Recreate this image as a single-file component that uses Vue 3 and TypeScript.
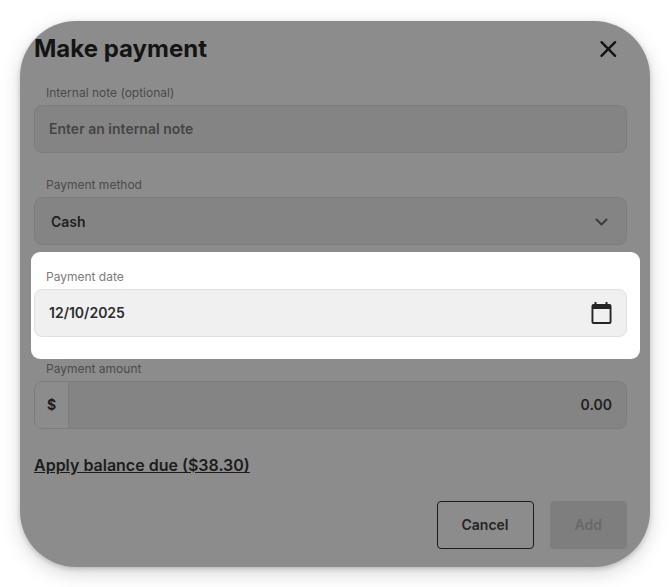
<script setup lang="ts">
import { computed, ref } from 'vue'

const note = ref('')
const method = ref('Cash')
const methods: string[] = ['Cash']
const date = ref('12/10/2025')
const amount = ref('0.00')
const balanceDue = 38.3

const canAdd = computed(() => Number(amount.value) > 0)

function applyBalance(): void {
  amount.value = balanceDue.toFixed(2)
}
</script>

<template>
  <main class="page">
    <form class="dialog" role="dialog" aria-labelledby="dialog-title" @submit.prevent>
      <header class="header">
        <h1 id="dialog-title" class="title">Make payment</h1>
        <button class="icon-button close" type="button" aria-label="Close">
          <svg width="18" height="18" viewBox="0 0 18 18" fill="none" stroke="#141414" stroke-width="2.4" stroke-linecap="round">
            <path d="M2.5 2.2l13.6 13.6M16.1 2.2L2.5 15.8" />
          </svg>
        </button>
      </header>

      <div class="fields">
        <div class="field">
          <label class="label" for="note">Internal note (optional)</label>
          <div class="control">
            <input id="note" v-model="note" class="input" type="text" placeholder="Enter an internal note" />
          </div>
        </div>

        <div class="field">
          <label class="label" for="method">Payment method</label>
          <div class="control select-control">
            <select id="method" v-model="method" class="input select">
              <option v-for="item in methods" :key="item">{{ item }}</option>
            </select>
            <svg class="chevron" width="14" height="12" viewBox="0 0 14 12" fill="none" stroke="#3d3d3d" stroke-width="2.1" stroke-linecap="round" stroke-linejoin="round">
              <path d="M2.5 4.5l5 5 5-5" />
            </svg>
          </div>
        </div>

        <div class="field highlighted">
          <label class="label" for="date">Payment date</label>
          <div class="control">
            <input id="date" v-model="date" class="input" type="text" />
            <button class="icon-button calendar" type="button" aria-label="Open calendar">
              <svg width="22" height="24" viewBox="0 0 22 24">
                <path fill="#252525" fill-rule="evenodd" d="M4.5 1h2v2h9V1h2v2h2a2 2 0 0 1 2 2v16a2 2 0 0 1-2 2h-16a2 2 0 0 1-2-2V5a2 2 0 0 1 2-2h1zM3.4 8v13h16.2V8z" />
              </svg>
            </button>
          </div>
        </div>

        <div class="field">
          <label class="label" for="amount">Payment amount</label>
          <div class="control">
            <span class="currency">$</span>
            <input id="amount" v-model="amount" class="input amount" type="text" inputmode="decimal" />
          </div>
        </div>
      </div>

      <a class="apply" href="#" @click.prevent="applyBalance">Apply balance due (${{ balanceDue.toFixed(2) }})</a>

      <footer class="actions">
        <button class="button cancel" type="button">Cancel</button>
        <button class="button add" type="submit" :disabled="!canAdd">Add</button>
      </footer>
    </form>
  </main>
</template>

<style>
body {
  background: #fff;
}
</style>

<style scoped>
.page,
.page * {
  box-sizing: border-box;
}

.page {
  padding: 21px 21px 20px 20px;
  font-family: Inter, 'Liberation Sans', sans-serif;
  color: #1c1c1c;
}

.dialog {
  display: flex;
  flex-direction: column;
  padding: 12px 23px 18px 14px;
  border-radius: 56px;
  background: #8c8c8c;
  box-shadow: 0 2px 5px rgba(0, 0, 0, 0.18), 0 6px 20px rgba(0, 0, 0, 0.16);
}

.header {
  display: flex;
  align-items: center;
  justify-content: space-between;
  height: 32px;
  margin-bottom: 16px;
}

.title {
  margin: 0;
  font-size: 24px;
  line-height: 32px;
  font-weight: 700;
  color: #141414;
}

.icon-button {
  display: flex;
  flex: none;
  padding: 0;
  border: 0;
  background: none;
}

.close {
  margin-right: 10px;
}

.fields {
  display: flex;
  flex-direction: column;
  gap: 20px;
}

.label {
  display: block;
  height: 24px;
  padding-left: 12px;
  font-size: 12px;
  line-height: 24px;
  color: #4b4b4b;
}

.control {
  display: flex;
  align-items: center;
  height: 48px;
  overflow: hidden;
  border: 1px solid #7d7d7d;
  border-radius: 8px;
  background: #848484;
}

.input {
  flex: 1;
  min-width: 0;
  height: 100%;
  margin: 0;
  padding: 0 14px 2px;
  border: 0;
  outline: 0;
  background: none;
  font: 600 14px/20px Inter, 'Liberation Sans', sans-serif;
  color: #1f1f1f;
}

.input::placeholder {
  color: #454545;
  opacity: 1;
}

.select-control {
  display: grid;
  align-items: center;
}

.select {
  grid-area: 1 / 1;
  padding: 2px 16px 0;
  appearance: none;
}

.chevron {
  grid-area: 1 / 1;
  justify-self: end;
  margin-right: 18px;
  pointer-events: none;
}

.highlighted {
  margin: -13px -13px -22px -3px;
  padding: 13px 13px 22px 3px;
  border-radius: 9px;
  background: #fff;
}

.highlighted .label {
  color: #7b7b7b;
}

.highlighted .control {
  border-color: #e0e0e0;
  background: #f0f0f0;
}

.highlighted .input {
  color: #2c2c2c;
}

.calendar {
  margin-right: 14px;
}

.currency {
  flex: none;
  width: 34px;
  height: 100%;
  border-right: 1px solid #7d7d7d;
  background: #8c8c8c;
  font-size: 14px;
  font-weight: 700;
  line-height: 46px;
  text-align: center;
}

.amount {
  text-align: right;
}

.apply {
  align-self: flex-start;
  margin-top: 24px;
  font-size: 16px;
  line-height: 24px;
  font-weight: 600;
  color: #1c1c1c;
  text-decoration: underline;
}

.actions {
  display: flex;
  justify-content: flex-end;
  gap: 16px;
  margin-top: 24px;
}

.button {
  height: 48px;
  padding: 0 24px;
  border: 1px solid #1c1c1c;
  border-radius: 4px;
  background: none;
  font: 600 14px/20px Inter, 'Liberation Sans', sans-serif;
  color: #242424;
}

.add:disabled {
  border-color: #7e7e7e;
  background: #7e7e7e;
  color: #696969;
}
</style>
